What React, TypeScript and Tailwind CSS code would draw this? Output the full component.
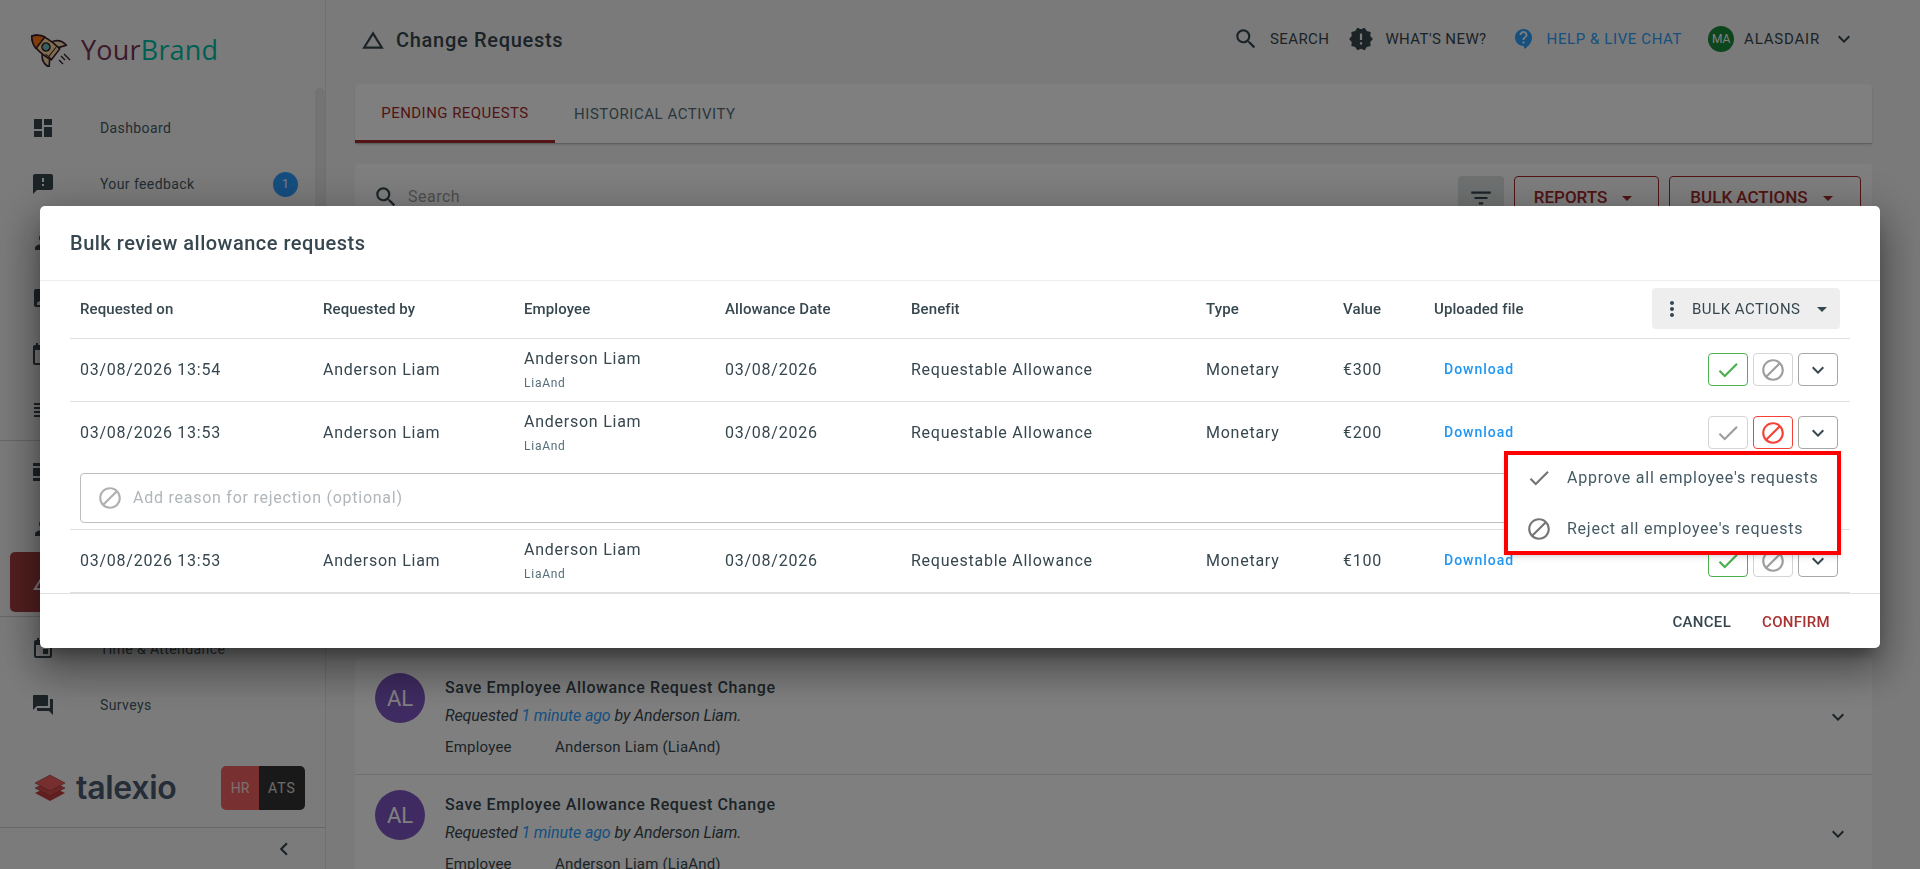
import {
  MdAssignmentInd,
  MdBlock,
  MdCalendarToday,
  MdChangeHistory,
  MdCheck,
  MdChevronLeft,
  MdContactSupport,
  MdDashboard,
  MdEvent,
  MdExpandMore,
  MdFeedback,
  MdFilterList,
  MdForum,
  MdMoreVert,
  MdNewReleases,
  MdPerson,
  MdArrowDropDown,
  MdReorder,
  MdSearch,
  MdViewDay,
} from 'react-icons/md';

const columns = 'grid grid-cols-[243px_201px_201px_186px_295px_137px_91px_1fr] items-center pl-[10px]';

const requests = [
  { on: '03/08/2026 13:54', value: '€300', rejected: false },
  { on: '03/08/2026 13:53', value: '€200', rejected: true },
  { on: '03/08/2026 13:53', value: '€100', rejected: false },
];

function Rocket() {
  return (
    <svg width="42" height="36" viewBox="0 0 42 36" className="shrink-0">
      <g transform="translate(16 16) rotate(-52)" stroke="#3a1a2a" strokeWidth="1.6" strokeLinejoin="round">
        <path d="M7 1 C13 4 15 9 14 15 L7 10 Z" fill="#f5e0b0" />
        <path d="M-7 1 C-13 4 -15 9 -14 15 L-7 10 Z" fill="#f5e0b0" />
        <path d="M0 -18 C7 -13 9 -3 7 12 L-7 12 C-9 -3 -7 -13 0 -18 Z" fill="#ffdf9f" />
        <path d="M0 -18 C4 -15 6.5 -11 7.4 -7 L-7.4 -7 C-6.5 -11 -4 -15 0 -18 Z" fill="#ff7a12" />
        <circle cx="0" cy="0" r="4" fill="#6fc0c0" />
        <path d="M-6 8 L6 8 M-6 4 L-6 12" strokeWidth="1" fill="none" />
      </g>
      <path d="M31 25 L35 29 M34 23 L40 29 M29 29 L33 33" stroke="#3a1a2a" strokeWidth="1.4" />
    </svg>
  );
}

function TalexioMark() {
  return (
    <svg width="32" height="28" viewBox="0 0 32 28" className="shrink-0">
      <path d="M16 12 L31 19 L16 27 L1 19 Z" fill="#c43c3c" />
      <path d="M16 7 L31 14 L16 22 L1 14 Z" fill="#d84a4a" stroke="#8a3a3a" strokeWidth="0.6" />
      <path d="M16 1 L31 9 L16 17 L1 9 Z" fill="#ee5c5c" stroke="#8a3a3a" strokeWidth="0.6" />
    </svg>
  );
}

function NavRow({ icon, label, badge }: { icon: React.ReactNode; label?: string; badge?: string }) {
  return (
    <div className="flex h-14 items-center pl-[31px] pr-[27px] text-[14px] tracking-[0.4px] text-[#455a64]">
      <span className="w-[69px] text-[24px] text-[#37474f]">{icon}</span>
      <span className="flex-1">{label}</span>
      {badge && (
        <span className="flex h-[25px] w-[25px] items-center justify-center rounded-full bg-[#2a9dff] text-[12px] text-white">
          {badge}
        </span>
      )}
    </div>
  );
}

function Sidebar() {
  return (
    <aside className="relative flex h-[869px] w-[326px] shrink-0 flex-col border-r border-[#e0e0e0] bg-[#f7f7f7]">
      <div className="flex h-[100px] shrink-0 items-start gap-[9px] pl-[30px] pt-[31px]">
        <Rocket />
        <span className="font-['Open_Sans',sans-serif] text-[27px] leading-[38px] tracking-[0.2px]">
          <span className="text-[#7a3458]">Your</span>
          <span className="text-[#00bfa5]">Brand</span>
        </span>
      </div>
      <div className="absolute right-0 top-[88px] h-[330px] w-[10px] rounded-full bg-[#e6e6e6]" />
      <div className="h-[341px] shrink-0 border-b border-[#cfcfcf]">
        <NavRow icon={<MdDashboard />} label="Dashboard" />
        <NavRow icon={<MdFeedback />} label="Your feedback" badge="1" />
        <div className="mt-[2px]">
          <NavRow icon={<MdPerson />} />
          <NavRow icon={<MdAssignmentInd />} />
          <NavRow icon={<MdCalendarToday />} />
          <NavRow icon={<MdReorder />} />
        </div>
      </div>
      <div className="h-[176px] shrink-0 border-b border-[#cfcfcf] pt-[3px]">
        <NavRow icon={<MdViewDay />} />
        <NavRow icon={<MdPerson />} />
        <div className="mx-[10px] -mt-[4px] flex h-[60px] items-center rounded-[5px] bg-[#a83f40] pl-[21px] text-[24px] text-white">
          <MdChangeHistory />
        </div>
      </div>
      <div className="shrink-0 pt-[4px]">
        <NavRow icon={<MdEvent />} label="Time & Attendance" />
        <NavRow icon={<MdForum />} label="Surveys" />
      </div>
      <div className="flex h-[94px] shrink-0 items-start pl-[34px] pt-[37px]">
        <div className="flex items-center gap-[10px]">
          <TalexioMark />
          <span className="font-['Inter',sans-serif] text-[32px] font-semibold leading-[36px] tracking-[-0.3px] text-[#4a5a70]">
            talexio
          </span>
        </div>
      </div>
      <div className="absolute left-[221px] top-[766px] flex h-[44px] w-[84px] overflow-hidden rounded-[5px] text-[14px] text-white/80">
        <span className="flex w-[38px] items-center justify-center bg-[#f06060]">HR</span>
        <span className="flex flex-1 items-center justify-center bg-[#333333] tracking-[1px]">ATS</span>
      </div>
      <div className="flex h-[42px] shrink-0 items-center justify-end border-t border-[#cfcfcf] pr-[28px] text-[26px] text-[#37474f]">
        <MdChevronLeft />
      </div>
    </aside>
  );
}

function TopBar() {
  return (
    <header className="flex h-[84px] shrink-0 items-start justify-between pl-[5px] pr-[16px] pt-[25px] text-[#37474f]">
      <div className="flex items-center gap-[10px] text-[20px] font-medium tracking-[0.7px]">
        <MdChangeHistory className="text-[26px]" />
        <span>Change Requests</span>
      </div>
      <div className="mt-[1px] flex items-center text-[15px] uppercase tracking-[0.4px]">
        <MdSearch className="text-[26px]" />
        <span className="ml-[11px]">Search</span>
        <MdNewReleases className="ml-[19px] text-[26px]" />
        <span className="ml-[11px]">What's new?</span>
        <MdContactSupport className="ml-[25px] text-[24px] text-[#2aa0ff]" />
        <span className="ml-[11px] tracking-[0.6px] text-[#2aa0ff]">Help & live chat</span>
        <span className="ml-[26px] flex h-[26px] w-[26px] items-center justify-center rounded-full bg-[#1b8a3a] text-[12px] tracking-normal text-white">
          MA
        </span>
        <span className="ml-[10px] tracking-[0.8px]">Alasdair</span>
        <MdExpandMore className="ml-[12px] text-[24px]" />
      </div>
    </header>
  );
}

function ChangeItem() {
  return (
    <div className="flex h-[117px] shrink-0 border-b border-[#e0e0e0] pl-[20px] pr-[22px] pt-[15px] text-[#37474f]">
      <span className="flex h-[50px] w-[50px] shrink-0 items-center justify-center rounded-full bg-[#7e57c2] text-[22px] text-white">
        AL
      </span>
      <div className="ml-[20px] flex-1">
        <div className="mt-[3px] text-[16px] font-medium leading-[24px] tracking-[0.6px]">
          Save Employee Allowance Request Change
        </div>
        <div className="mt-[4px] text-[16px] italic leading-[24px] tracking-[-0.1px]">
          Requested <span className="text-[#2aa0ff]">1 minute ago</span> by Anderson Liam.
        </div>
        <div className="mt-[8px] flex text-[15px] leading-[22px] tracking-[0.2px]">
          <span className="w-[110px]">Employee</span>
          <span>Anderson Liam (LiaAnd)</span>
        </div>
      </div>
      <MdExpandMore className="mt-[32px] text-[24px]" />
    </div>
  );
}

function Main() {
  return (
    <main className="flex h-[869px] flex-1 flex-col overflow-hidden pl-[29px] pr-[48px]">
      <TopBar />
      <div className="flex h-[60px] shrink-0 rounded-t-[4px] border-b border-[#c0c0c0] bg-white text-[15px] uppercase tracking-[0.55px] shadow-sm">
        <div className="flex w-[200px] items-center justify-center border-b-[3px] border-[#a52a2a] pt-[2px] tracking-[0.45px] text-[#a52a2a]">
          Pending requests
        </div>
        <div className="ml-[19px] flex items-center pt-[2px] text-[#546e7a]">Historical activity</div>
      </div>
      <div className="mt-[20px] flex h-[64px] shrink-0 items-start justify-between rounded-t-[4px] bg-white pl-[18px] pr-[11px] pt-[12px] text-[#a52a2a]">
        <div className="flex items-center gap-[9px] pt-[8px] text-[16px] tracking-[0.5px] text-[#9e9e9e]">
          <MdSearch className="text-[26px] text-[#37474f]" />
          Search
        </div>
        <div className="flex gap-[10px] text-[17px] font-medium">
          <span className="flex h-[44px] w-[46px] items-center justify-center rounded-[4px] bg-[#e0e5e5] text-[26px] text-[#37474f]">
            <MdFilterList />
          </span>
          <span className="flex h-[44px] w-[145px] items-center justify-center rounded-[4px] border border-[#a52a2a]">
            REPORTS <MdArrowDropDown className="ml-[8px] text-[24px]" />
          </span>
          <span className="flex h-[44px] w-[192px] items-center justify-center rounded-[4px] border border-[#a52a2a]">
            BULK ACTIONS <MdArrowDropDown className="ml-[8px] text-[24px]" />
          </span>
        </div>
      </div>
      <div className="mt-[430px] shrink-0 rounded-t-[4px] bg-white">
        <ChangeItem />
        <ChangeItem />
      </div>
    </main>
  );
}

function RowActions({ rejected }: { rejected: boolean }) {
  return (
    <div className="flex justify-end gap-[5px] pr-[12px] text-[26px]">
      <button
        className={`flex h-[33px] w-[40px] items-center justify-center rounded-[4px] border ${
          rejected ? 'border-[#d4d4d4] text-[#9e9e9e]' : 'border-[#4caf50] text-[#4caf50]'
        }`}
      >
        <MdCheck />
      </button>
      <button
        className={`flex h-[33px] w-[40px] items-center justify-center rounded-[4px] border ${
          rejected ? 'border-[#f44336] text-[#f44336]' : 'border-[#d4d4d4] text-[#9e9e9e]'
        }`}
      >
        <MdBlock />
      </button>
      <button className="flex h-[33px] w-[40px] items-center justify-center rounded-[4px] border border-[#a8a8a8] text-[24px] text-[#37474f]">
        <MdExpandMore />
      </button>
    </div>
  );
}

function BulkDialog() {
  return (
    <div className="relative h-[442px] w-full rounded-[5px] bg-white text-[#37474f] shadow-[0_11px_15px_-7px_rgba(0,0,0,0.35),0_24px_38px_3px_rgba(0,0,0,0.25),0_9px_46px_8px_rgba(0,0,0,0.22)]">
      <div className="flex h-[75px] items-center border-b border-[#eeeeee] pl-[30px] text-[20px] font-medium tracking-[0.5px]">
        Bulk review allowance requests
      </div>
      <div className="ml-[30px] mr-[30px]">
        <div className={`${columns} h-[58px] border-b border-[#e0e0e0] text-[15px] font-medium tracking-[0.1px]`}>
          <span>Requested on</span>
          <span>Requested by</span>
          <span>Employee</span>
          <span>Allowance Date</span>
          <span>Benefit</span>
          <span>Type</span>
          <span>Value</span>
          <span className="relative">
            Uploaded file
            <span className="absolute -top-[10px] right-[10px] flex h-[41px] w-[188px] items-center rounded-[4px] bg-[#eeeeee] pl-[8px] text-[15px] font-normal tracking-[0.5px]">
              <MdMoreVert className="text-[24px]" />
              <span className="ml-[8px] flex-1">BULK ACTIONS</span>
              <MdArrowDropDown className="mr-[6px] text-[24px]" />
            </span>
          </span>
        </div>
        {requests.map((r) => (
          <div key={r.value} className="border-b border-[#e0e0e0] text-[16px] tracking-[0.75px]">
            <div className={`${columns} h-[62px] pb-[1px]`}>
              <span>{r.on}</span>
              <span>Anderson Liam</span>
              <span className="leading-[24px]">
                Anderson Liam
                <span className="mt-[2px] block text-[12px] leading-[20px] text-[#546e7a]">LiaAnd</span>
              </span>
              <span>03/08/2026</span>
              <span>Requestable Allowance</span>
              <span>Monetary</span>
              <span>{r.value}</span>
              <div className="flex items-center justify-between">
                <span className="pl-[10px] text-[14px] font-medium tracking-[1px] text-[#2196f3]">Download</span>
                <RowActions rejected={r.rejected} />
              </div>
            </div>
            {r.rejected && (
              <div className="px-[10px] pb-[6px] pt-[9px]">
                <div className="flex h-[50px] items-center rounded-[4px] border border-[#bdbdbd] pl-[16px]">
                  <MdBlock className="text-[26px] text-[#b0b0b0]" />
                  <input
                    className="ml-[10px] flex-1 bg-transparent text-[16px] tracking-[0.75px] outline-none placeholder:text-[#b0b6ba]"
                    placeholder="Add reason for rejection (optional)"
                  />
                </div>
              </div>
            )}
          </div>
        ))}
      </div>
      <div className="flex h-[55px] items-center justify-end gap-[31px] border-t border-[#e0e0e0] pr-[50px] pt-[3px] text-[15px] font-medium tracking-[0.3px]">
        <span>CANCEL</span>
        <span className="text-[#a83232]">CONFIRM</span>
      </div>
      <div className="absolute left-[1464px] top-[245px] h-[104px] w-[337px] border-4 border-[#ff0000] bg-white text-[16px] tracking-[0.75px] text-[#455a64] shadow-md">
        <div className="flex h-[46px] items-center pl-[18px]">
          <MdCheck className="text-[26px] text-[#757575]" />
          <span className="ml-[15px]">Approve all employee's requests</span>
        </div>
        <div className="mt-[6px] flex h-[44px] items-center pl-[18px]">
          <MdBlock className="text-[26px] text-[#757575]" />
          <span className="ml-[15px]">Reject all employee's requests</span>
        </div>
      </div>
    </div>
  );
}

export default function App() {
  return (
    <div className="relative flex h-[869px] overflow-hidden bg-[#f5f5f5] font-['Roboto',sans-serif]">
      <Sidebar />
      <Main />
      <div className="fixed inset-0 bg-black/50 px-[40px] pt-[206px]">
        <BulkDialog />
      </div>
    </div>
  );
}
